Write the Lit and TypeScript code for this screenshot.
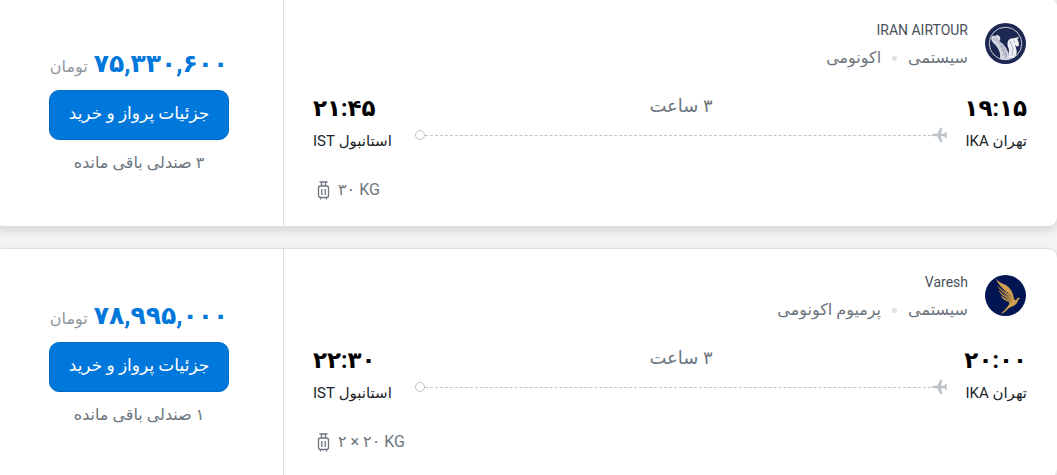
import { LitElement, html, css, svg } from "lit";
import { customElement, property } from "lit/decorators.js";

interface Flight {
  airline: string;
  logo: "airtour" | "varesh";
  cabin: string;
  departTime: string;
  arriveTime: string;
  duration: string;
  baggage: string;
  price: string;
  seats: string;
}

const flights: Flight[] = [
  {
    airline: "IRAN AIRTOUR",
    logo: "airtour",
    cabin: "اکونومی",
    departTime: "۱۹:۱۵",
    arriveTime: "۲۱:۴۵",
    duration: "۳ ساعت",
    baggage: "۳۰ KG",
    price: "۷۵,۳۳۰,۶۰۰",
    seats: "۳ صندلی باقی مانده",
  },
  {
    airline: "Varesh",
    logo: "varesh",
    cabin: "پرمیوم اکونومی",
    departTime: "۲۰:۰۰",
    arriveTime: "۲۲:۳۰",
    duration: "۳ ساعت",
    baggage: "۲ × ۲۰ KG",
    price: "۷۸,۹۹۵,۰۰۰",
    seats: "۱ صندلی باقی مانده",
  },
];

const logos = {
  airtour: svg`
    <circle cx="20.5" cy="20.5" r="20.5" fill="#1c2752"/>
    <circle cx="20.5" cy="20.5" r="16.3" fill="none" stroke="#c9ccd8" stroke-width="1"/>
    <path d="M6 15 L7.5 12.8 L10 13 L12 11.8 L14.5 13 L15.5 15.5 L14.5 18 L18 21 Q22 25 23.5 30 L24.5 36.5 Q19 37.8 15 36 Q16 28 10.5 22 Q6.5 19 6 15Z" fill="#d4d6e0"/>
    <path d="M24 35.5 Q23.5 30 24 27 L22.5 22 Q22 17 26 15.5 L30 15 L34.5 13.5 L32.5 16 L34 20.5 L33.8 23 L31.5 23.5 L30 21.5 L31.5 27 Q32.5 31 29.5 34.5Z" fill="#eceef4"/>
    <path d="M8 15.5 Q17 19 21 36 M10 14.5 Q20 22 22 34 M14.5 24 L18 23 M16.5 28 L20 26.5 M17.5 32 L22 30 M25 18 L28 26 L27 33 M28 18 L30 19" fill="none" stroke="#858ba5" stroke-width=".6"/>`,
  varesh: svg`
    <circle cx="20.5" cy="20.5" r="20.5" fill="#021553"/>
    <path d="M11 3.5 Q14 7.5 20 9.5 Q28 14 29 24 Q31 26.5 32 23.5 Q33 22.2 35.2 23.2 L33.2 25 Q32 29.5 28.5 31 Q24 32 21 36 Q19 38.3 15.5 38.8 Q20 35.5 23 31 Q25 29 24 27 Q18 25 15.5 20.5 Q19 23.2 24 24.5 Q16 20.5 13.5 15.5 Q18 20 24.5 22 Q16 17 12.2 10.5 Q17 15.5 24.5 19 Q13 11 11 3.5Z" fill="#d0a04f"/>
    <path d="M13.5 14.5 Q19 21 26.5 24.5 M12.5 10.5 Q18 17.5 26.5 21.5 M16 19.5 Q20 24 26 26.5" fill="none" stroke="#55432c" stroke-width=".7"/>`,
};

@customElement("flight-card")
export class FlightCard extends LitElement {
  @property({ attribute: false }) flight!: Flight;

  static styles = css`
    :host {
      display: block;
    }
    .card {
      display: flex;
      background: #fff;
      border: 1px solid #dedede;
      border-radius: 10px;
      box-shadow: 0 4px 10px rgba(0, 0, 0, 0.12);
      color: #212529;
      font-size: 16px;
      line-height: 28px;
    }
    .details {
      flex: 1;
      padding: 19px 30px 22px 29px;
    }
    .airline {
      display: flex;
      gap: 17px;
      padding-inline-start: 1px;
    }
    .logo {
      width: 41px;
      height: 41px;
      margin-top: 7px;
    }
    .name {
      color: #495057;
      font-size: 14px;
    }
    .kind {
      display: flex;
      align-items: center;
      gap: 11px;
      color: #6c757d;
    }
    .dot {
      width: 5px;
      height: 5px;
      border-radius: 50%;
      background: #dee2e6;
    }
    .route {
      display: grid;
      grid-template-columns: 60px 1fr 82px;
      column-gap: 20px;
      margin-top: 18px;
    }
    .stop {
      white-space: nowrap;
    }
    .arrival {
      direction: ltr;
    }
    .time {
      color: #000;
      font-size: 23px;
      font-weight: 700;
      line-height: 38px;
    }
    .city {
      direction: rtl;
      unicode-bidi: isolate;
      font-size: 15px;
      line-height: 26px;
    }
    .arrival .city {
      text-align: left;
    }
    .path {
      color: #6c757d;
      text-align: center;
      font-size: 18px;
    }
    .duration {
      line-height: 32px;
    }
    .track {
      display: flex;
      align-items: center;
      height: 26px;
    }
    .plane {
      width: 16px;
      height: 16px;
      fill: #bcc5cc;
    }
    .dash {
      flex: 1;
      border-top: 1px dashed #bcc5cc;
    }
    .end {
      box-sizing: border-box;
      width: 10px;
      height: 10px;
      border: 1px solid #bcc5cc;
      border-radius: 50%;
    }
    .baggage {
      display: flex;
      align-items: center;
      gap: 8px;
      margin-top: 22px;
      padding-left: 4px;
      direction: ltr;
      color: #6c757d;
    }
    .case {
      width: 13px;
      height: 19px;
      fill: none;
      stroke: #6c757d;
    }
    .offer {
      display: flex;
      flex-direction: column;
      align-items: center;
      box-sizing: border-box;
      width: 289px;
      padding-top: 49px;
      border-inline-start: 1px solid #dedede;
      color: #6c757d;
    }
    .cost {
      display: flex;
      align-items: baseline;
      gap: 6px;
      line-height: 36px;
    }
    .price {
      color: #0077db;
      font-size: 25px;
      font-weight: 700;
    }
    .unit {
      color: #8f979e;
    }
    .buy {
      width: 180px;
      height: 50px;
      margin: 5px 0 9px;
      padding: 0 0 4px;
      border: 1px solid #006bc8;
      border-radius: 10px;
      background: #0077db;
      color: #fff;
      font: inherit;
      font-size: 17px;
      cursor: pointer;
    }
  `;

  render() {
    const f = this.flight;
    return html`
      <article class="card">
        <section class="details">
          <div class="airline">
            <svg class="logo" viewBox="0 0 41 41" aria-hidden="true">${logos[f.logo]}</svg>
            <div>
              <div class="name">${f.airline}</div>
              <div class="kind"><span>سیستمی</span><i class="dot"></i><span>${f.cabin}</span></div>
            </div>
          </div>
          <div class="route">
            <div class="stop">
              <div class="time">${f.departTime}</div>
              <div class="city">تهران IKA</div>
            </div>
            <div class="path">
              <div class="duration">${f.duration}</div>
              <div class="track">
                <svg class="plane" viewBox="0 0 16 16" aria-hidden="true">
                  <path d="M0.5 8 Q1.5 6.8 3.5 6.7 H6.2 L9.4 0.8 H11.4 L10 6.7 H13.2 L14.2 5.2 H16 L15.5 8 L16 10.8 H14.2 L13.2 9.3 H10 L11.4 15.2 H9.4 L6.2 9.3 H3.5 Q1.5 9.2 0.5 8Z"/>
                </svg>
                <span class="dash"></span>
                <span class="end"></span>
              </div>
            </div>
            <div class="stop arrival">
              <div class="time">${f.arriveTime}</div>
              <div class="city">استانبول IST</div>
            </div>
          </div>
          <div class="baggage">
            <svg class="case" viewBox="0 0 13 19" aria-hidden="true">
              <path d="M2.5 1 H10.5 M4.5 1 V5 M8.5 1 V5 M3.5 5 H9.5 Q11.5 5 11.5 7 V14.5 Q11.5 16.5 9.5 16.5 H3.5 Q1.5 16.5 1.5 14.5 V7 Q1.5 5 3.5 5Z M4.8 8 V14 M8.2 8 V14 M3.5 16.5 V18.5 M9.5 16.5 V18.5" stroke-width="1.3"/>
            </svg>
            <span>${f.baggage}</span>
          </div>
        </section>
        <section class="offer">
          <div class="cost">
            <span class="price">${f.price}</span>
            <span class="unit">تومان</span>
          </div>
          <button class="buy" type="button">جزئیات پرواز و خرید</button>
          <div>${f.seats}</div>
        </section>
      </article>
    `;
  }
}

@customElement("app-root")
export class AppRoot extends LitElement {
  static styles = css`
    :host {
      display: block;
      height: 100vh;
      overflow: hidden;
      background: #f4f4f4;
      font-family: Roboto, "DejaVu Sans", sans-serif;
    }
    .list {
      display: grid;
      gap: 21px;
      margin: -4px -1px 0 -6px;
    }
  `;

  render() {
    return html`
      <main class="list" dir="rtl" lang="fa">
        ${flights.map((f) => html`<flight-card .flight=${f}></flight-card>`)}
      </main>
    `;
  }
}
